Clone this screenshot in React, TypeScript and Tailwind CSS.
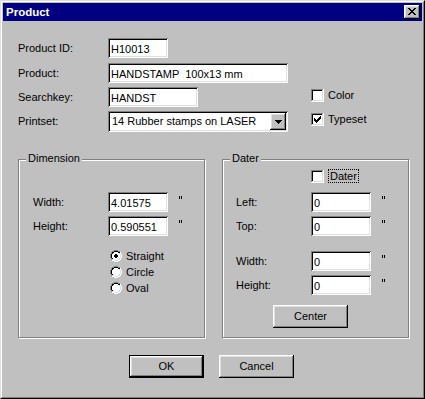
import type { ReactNode } from "react";

const sunken =
  "bg-white shadow-[inset_1px_1px_0_#808080,inset_-1px_-1px_0_#ffffff,inset_2px_2px_0_#000000,inset_-2px_-2px_0_#dfdfdf]";
const raised =
  "bg-[#c0c0c0] shadow-[inset_-1px_-1px_0_#000000,inset_1px_1px_0_#ffffff,inset_-2px_-2px_0_#808080,inset_2px_2px_0_#dfdfdf]";

const palette: Record<string, string> = {
  K: "#000000",
  G: "#808080",
  L: "#dfdfdf",
  W: "#ffffff",
  w: "#ffffff",
};

// tiny bitmap glyphs, drawn pixel by pixel like the old 16-bit controls
function Pixels({ rows }: { rows: string[] }) {
  const w = rows[0].length;
  const h = rows.length;
  return (
    <svg width={w} height={h} viewBox={`0 0 ${w} ${h}`} shapeRendering="crispEdges" className="block shrink-0">
      {rows.flatMap((row, y) =>
        row.split("").map((c, x) =>
          palette[c] ? <rect key={`${x}-${y}`} x={x} y={y} width={1} height={1} fill={palette[c]} /> : null
        )
      )}
    </svg>
  );
}

const closeGlyph = ["KK....KK", ".KK..KK.", "..KKKK..", "...KK...", "..KKKK..", ".KK..KK.", "KK....KK"];
const arrowGlyph = ["KKKKKKK", ".KKKKK.", "..KKK..", "...K..."];
const inchGlyph = ["K.K", "K.K", "K.K"];

function checkRows(checked: boolean) {
  const mark = ["......K", ".....KK", "K...KKK", "KK.KKK.", "KKKKK..", ".KKK...", "..K...."];
  const rows: string[] = [];
  rows.push("GGGGGGGGGGGGW");
  rows.push("GKKKKKKKKKKLW");
  for (let i = 0; i < 9; i++) {
    let inner = "wwwwwwwww";
    if (checked && i >= 1 && i <= 7) {
      const m = mark[i - 1].replace(/\./g, "w");
      inner = "w" + m + "w";
    }
    rows.push("GK" + inner + "LW");
  }
  rows.push("GLLLLLLLLLLLW");
  rows.push("WWWWWWWWWWWWW");
  return rows;
}

function radioRows(on: boolean) {
  const base = [
    "....GGGG....",
    "..GGKKKKGG..",
    ".GKKwwwwKKW.",
    ".GKwwwwwwLW.",
    "GKwwwwwwwwLW",
    "GKwwwwwwwwLW",
    "GKwwwwwwwwLW",
    "GKwwwwwwwwLW",
    ".GKwwwwwwLW.",
    ".GLLwwwwLLW.",
    "..WWLLLLWW..",
    "....WWWW....",
  ];
  if (!on) return base;
  const dot = [".KK.", "KKKK", "KKKK", ".KK."];
  return base.map((row, y) => {
    if (y < 4 || y > 7) return row;
    const d = dot[y - 4];
    const chars = row.split("");
    d.split("").forEach((c, i) => {
      if (c === "K") chars[4 + i] = "K";
    });
    return chars.join("");
  });
}

function Edit({ value, className = "" }: { value: string; className?: string }) {
  return (
    <input
      readOnly
      value={value}
      className={`${className} h-[20px] ${sunken} pl-[3px] pt-[1px] text-[11px] text-black outline-none whitespace-pre`}
    />
  );
}

function Row({ label, labelW = "w-[90px]", className = "", children }: { label: string; labelW?: string; className?: string; children: ReactNode }) {
  return (
    <div className={`flex h-[20px] ${className}`}>
      <div className={`${labelW} flex items-center`}>{label}</div>
      {children}
    </div>
  );
}

function Check({ label, checked, focus = false }: { label: string; checked: boolean; focus?: boolean }) {
  return (
    <div className="flex items-center h-[14px] gap-[4px]">
      <Pixels rows={checkRows(checked)} />
      <span className={focus ? "border border-dotted border-black px-[1px] leading-[12px]" : "leading-[13px]"}>{label}</span>
    </div>
  );
}

function Radio({ label, on }: { label: string; on: boolean }) {
  return (
    <div className="flex items-center h-[16px] gap-[4px]">
      <Pixels rows={radioRows(on)} />
      <span>{label}</span>
    </div>
  );
}

function Group({ title, children }: { title: string; children: ReactNode }) {
  return (
    <div className="relative w-[187px] h-[179px] border border-[#808080] shadow-[1px_1px_0_#ffffff,inset_1px_1px_0_#ffffff]">
      <span className="absolute left-[7px] top-[-8px] px-[2px] bg-[#c0c0c0] leading-[13px]">{title}</span>
      {children}
    </div>
  );
}

// inch mark, two short ticks
const Inch = () => (
  <span className="ml-[11px] pt-[4px]" aria-label='"'>
    <Pixels rows={inchGlyph} />
  </span>
);

export default function App() {
  return (
    <div className="w-[425px] h-[399px] bg-[#c0c0c0] border border-t-[#dfdfdf] border-l-[#dfdfdf] border-r-black border-b-black font-['Liberation_Sans',Arial,sans-serif] text-[11px] leading-[13px] text-black antialiased select-none">
      <div className="h-full border border-t-white border-l-white border-r-[#808080] border-b-[#808080] p-px flex flex-col">
        {/* Title bar */}
        <div className="h-[18px] bg-[#000080] flex items-center justify-between pl-[3px] pr-[2px]">
          <span className="text-white font-bold text-[11.5px]">Product</span>
          <button type="button" className={`w-[16px] h-[14px] ${raised} flex items-center justify-center pb-px`}>
            <Pixels rows={closeGlyph} />
          </button>
        </div>

        <div className="flex flex-col pl-[15px] pt-[17px]">
          <Row label="Product ID:">
            <Edit value="H10013" className="w-[60px]" />
          </Row>
          <Row label="Product:" className="mt-[5px]">
            <Edit value="HANDSTAMP  100x13 mm" className="w-[180px]" />
          </Row>
          <Row label="Searchkey:" className="mt-[4px]">
            <Edit value="HANDST" className="w-[90px]" />
            <div className="ml-[113px] mt-px self-start">
              <Check label="Color" checked={false} />
            </div>
          </Row>
          <div className="flex h-[21px] mt-[4px]">
            <div className="w-[90px] flex items-center">Printset:</div>
            <div className={`w-[180px] h-[21px] ${sunken} flex items-center pl-[4px] pr-[2px]`}>
              <span className="flex-1">14 Rubber stamps on LASER</span>
              <div className={`w-[16px] h-[17px] ${raised} flex items-center justify-center`}>
                <Pixels rows={arrowGlyph} />
              </div>
            </div>
            <div className="ml-[23px] mt-px self-start">
              <Check label="Typeset" checked />
            </div>
          </div>

          {/* Group boxes */}
          <div className="flex gap-[17px] mt-[27px]">
            <Group title="Dimension">
              <div className="flex flex-col pt-[32px] pl-[14px]">
                <Row label="Width:" labelW="w-[75px]">
                  <Edit value="4.01575" className="w-[60px]" />
                  <Inch />
                </Row>
                <Row label="Height:" labelW="w-[75px]" className="mt-[4px]">
                  <Edit value="0.590551" className="w-[60px]" />
                  <Inch />
                </Row>
                <div className="flex flex-col ml-[77px] mt-[12px]">
                  <Radio label="Straight" on />
                  <Radio label="Circle" on={false} />
                  <Radio label="Oval" on={false} />
                </div>
              </div>
            </Group>
            <Group title="Dater">
              <div className="flex flex-col pt-[9px]">
                <div className="pl-[88px]">
                  <Check label="Dater" checked={false} focus />
                </div>
                <div className="flex flex-col pl-[13px] mt-[9px]">
                  <Row label="Left:" labelW="w-[75px]">
                    <Edit value="0" className="w-[60px]" />
                    <Inch />
                  </Row>
                  <Row label="Top:" labelW="w-[75px]" className="mt-[4px]">
                    <Edit value="0" className="w-[60px]" />
                    <Inch />
                  </Row>
                  <Row label="Width:" labelW="w-[75px]" className="mt-[15px]">
                    <Edit value="0" className="w-[60px]" />
                    <Inch />
                  </Row>
                  <Row label="Height:" labelW="w-[75px]" className="mt-[4px]">
                    <Edit value="0" className="w-[60px]" />
                    <Inch />
                  </Row>
                </div>
                <button type="button" className={`ml-[50px] mt-[10px] w-[75px] h-[23px] ${raised} flex items-center justify-center`}>
                  Center
                </button>
              </div>
            </Group>
          </div>

          {/* Dialog buttons */}
          <div className="flex gap-[15px] mt-[17px] ml-[111px]">
            <button type="button" className="w-[75px] h-[23px] border border-black">
              <div className={`w-full h-full ${raised} flex items-center justify-center`}>OK</div>
            </button>
            <button type="button" className={`w-[75px] h-[23px] ${raised} flex items-center justify-center`}>
              Cancel
            </button>
          </div>
        </div>
      </div>
    </div>
  );
}
